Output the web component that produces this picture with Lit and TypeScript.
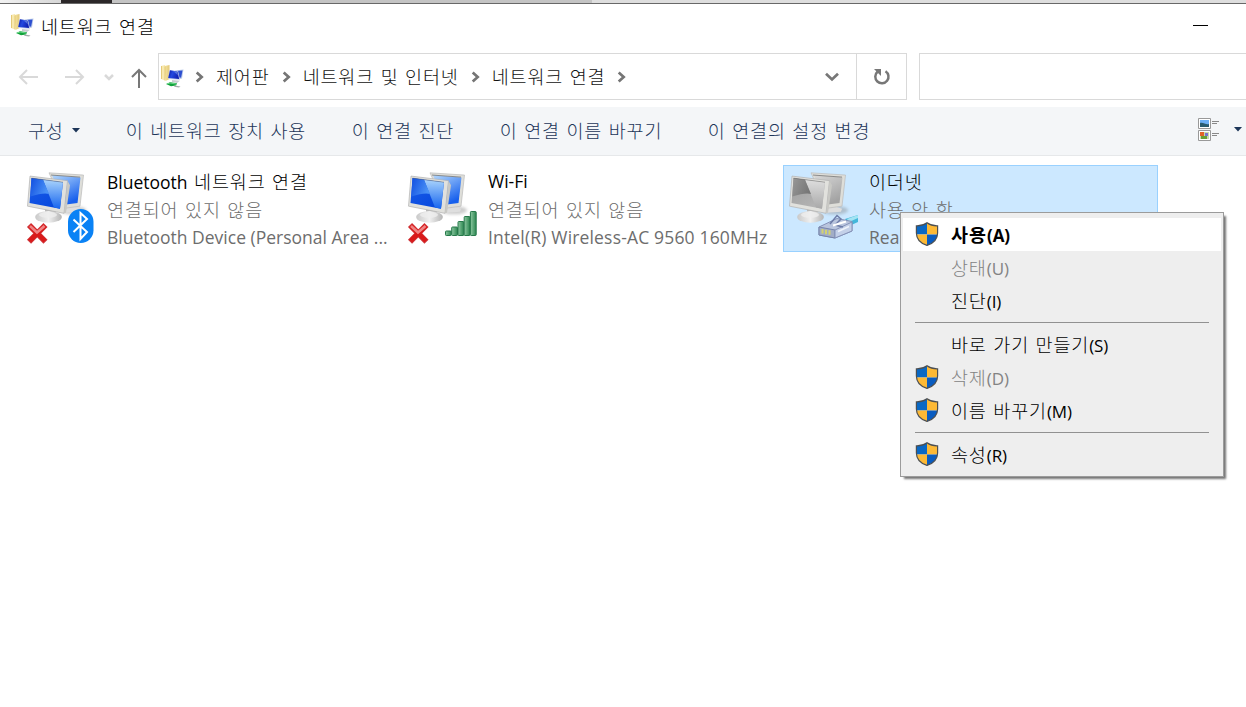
import { LitElement, html, css, svg, nothing } from "lit";
import { customElement, property } from "lit/decorators.js";
import { classMap } from "lit/directives/class-map.js";

const textBase = css`
  :host {
    font-family: "Open Sans", "Noto Sans CJK KR", sans-serif;
    font-size: 18px;
    font-weight: 300;
  }
  * { box-sizing: border-box; }
  svg { display: block; flex: none; overflow: visible; }
`;

const ko = css`
  .ko {
    font-family: "Noto Sans CJK KR", sans-serif;
    font-weight: 300;
    font-size: 18.500px;
    letter-spacing: 0.85px;
    word-spacing: 1.600px;
    white-space: pre;
  }
`;

/* Folder with a small network monitor. */
@customElement("net-folder-icon")
class NetFolderIcon extends LitElement {
  static styles = css`:host { display: block; flex: none; width: 24px; height: 24px; } svg { display: block; }`;
  render() {
    return html`<svg width="24" height="24" viewBox="0 0 24 24">
      <defs>
        <linearGradient id="f"><stop offset="0" stop-color="#f7e7a4"/><stop offset="1" stop-color="#e3c878"/></linearGradient>
        <linearGradient id="m" x2="1" y2="0.3"><stop offset="0" stop-color="#0714a0"/><stop offset=".45" stop-color="#2449df"/><stop offset="1" stop-color="#1022b4"/></linearGradient>
      </defs>
      <path d="M0 1 4 0v15.500l-4-1.500z" fill="#f8e9b0"/>
      <path d="M3.500 1l5-1v14l-4 2z" fill="url(#f)"/>
      <path d="M.5 1v13M4 1.500v14" stroke="#d9b652" stroke-width=".6"/>
      <path d="M14 5.500l8.500-1-1.500 9-4 1z" fill="#b9c9e9"/>
      <path d="M15.500 6l6-.6-1.400 7-3.500.5z" fill="#2d4fd0"/>
      <path d="M8 5l9 1 2 9-11.500-1z" fill="#cfd8ec"/>
      <path d="M9 5.200l7.500 1.300 1.700 7.500-11-1z" fill="url(#m)"/>
      <path d="M12 6l4 .8 1 3.500z" fill="#7ea1f0" opacity=".6"/>
      <path d="M11 15l8 .8-3 2.200-5-1z" fill="#c9ced2"/>
      <path d="M5 19l4-1.800 7 1-1 2.300-5 .7z" fill="#12a33b"/>
      <path d="M6 19l3-1 6 1" stroke="#6ad688" fill="none"/>
      <path d="M14 20.500l5.500 1-1.500 1-5-.7z" fill="#a3aaa9"/>
    </svg>`;
  }
}

/* UAC shield. */
@customElement("uac-shield")
class UacShield extends LitElement {
  static styles = css`:host { display: block; flex: none; width: 24px; height: 24px; } svg { display: block; }`;
  render() {
    const shape = "M12 .8C9 3 5 4 1.400 3.900V11C1.400 17 6 21.500 12 23.400 18 21.500 22.600 17 22.600 11V3.900C19 4 15 3 12 .8Z";
    return html`<svg width="24" height="24" viewBox="0 0 24 24">
      <defs><clipPath id="s"><path d=${shape}/></clipPath></defs>
      <g clip-path="url(#s)">
        <path d="M0 0h12v12.500H0z" fill="#0a68c4"/><path d="M12 0h12v12.500H12z" fill="#fdb935"/>
        <path d="M0 12.500h12v12H0z" fill="#fdb935"/><path d="M12 12.500h12v12H12z" fill="#0a5cc0"/>
      </g>
      <path d=${shape} fill="none" stroke="#4c4f52" stroke-width="1.200"/>
    </svg>`;
  }
}

type Badge = "bluetooth" | "signal" | "ethernet";

/* Paired monitors with a connection badge. */
@customElement("adapter-icon")
class AdapterIcon extends LitElement {
  @property() badge: Badge = "bluetooth";
  @property({ type: Boolean }) off = false;
  static styles = css`:host { display: block; flex: none; width: 72px; height: 76px; } svg { display: block; }`;

  private cross() {
    return svg`<g fill="none">
      <path d="M2 54 18.500 70.700M18.500 54 2 70.700" stroke="#cf3a3f" stroke-width="5.800"/>
      <path d="M2.600 54.600 18 70M18 54.600 2.600 70" stroke="#d91a1a" stroke-width="4.400"/>
      <path d="M3 55 10 61.500 17.500 55" stroke="#ef8585" stroke-width="2.600"/>
    </g>`;
  }

  private badgeArt() {
    if (this.badge === "bluetooth") {
      return svg`<rect x="41" y="38" width="25.500" height="34" rx="12.700" fill="#0a82f5"/>
        <path d="M46.500 48.500 60 61 53.500 68V42L60 48 46.500 61" fill="none" stroke="#fff" stroke-width="2"/>`;
    }
    if (this.badge === "signal") {
      const bars = [[37.500, 60, 4.500], [43.700, 56, 8.500], [50, 50.500, 14], [56.200, 45.500, 19], [62.400, 40.500, 24]];
      return svg`${bars.map(([x, y, h]) => svg`<rect x=${x} y=${y} width="5.800" height=${h} rx=".8" fill="url(#g)" stroke="#26794a"/>`)}`;
    }
    return svg`<path d="M56 48 69 44v7l-9 4z" fill="#43b7da"/><path d="M58 48l11-4v3l-9 4z" fill="#a2e4f3"/>
      <path d="M30 56 48 47.500l15 3V60L46 67 30 64z" fill="#b9c5de" stroke="#8592b8"/>
      <path d="M30 56l16 3V67L30 64z" fill="#a2adc6" stroke="#7785ab"/>
      <path d="M46 59 63 51v9L46 67z" fill="#c3d0e8" stroke="#8592b8"/>
      <path d="M41 53 48 44.500l4 3.500-6 6 8 2" fill="none" stroke="#6d7ca8" stroke-width="1.500"/>
      <path d="M44 54.500l13-4" stroke="#fff" stroke-width="2"/>
      <path d="M49 60.500l11-5" stroke="#eef3fb" stroke-width="1.500"/>
      <path d="M33.500 58v4.500M37 58.700v4.500M40.500 59.300v4.500" stroke="#d4d36e" stroke-width="2"/>`;
  }

  render() {
    const o = this.off;
    return html`<svg width="72" height="76" viewBox="-1 -1 72 76">
      <defs>
        <linearGradient id="a" x1="0" y1="0" x2=".7" y2="1">
          <stop offset="0" stop-color=${o ? "#9c9c9c" : "#1d5eea"}/><stop offset="1" stop-color=${o ? "#b5b5b5" : "#0648dd"}/>
        </linearGradient>
        <linearGradient id="v" x1="0" y1="0" x2="0" y2="1">
          <stop offset="0" stop-color=${o ? "#dedede" : "#a9d3fc"}/><stop offset="1" stop-color=${o ? "#a9a9a9" : "#1665ef"}/>
        </linearGradient>
        <linearGradient id="l" x1="0" y1="0" x2="1" y2=".4">
          <stop offset="0" stop-color=${o ? "#989898" : "#104de0"}/><stop offset="1" stop-color=${o ? "#777" : "#4a92f6"}/>
        </linearGradient>
        <linearGradient id="b" x1="0" y1="0" x2=".5" y2="1">
          <stop offset="0" stop-color=${o ? "#d8d8d8" : "#b4d8fc"}/><stop offset="1" stop-color=${o ? "#a3a3a3" : "#1760ed"}/>
        </linearGradient>
        <linearGradient id="c"><stop offset="0" stop-color="#c9c9c9"/><stop offset=".5" stop-color="#f0f0f0"/><stop offset="1" stop-color="#b5b5b5"/></linearGradient>
        <linearGradient id="g"><stop offset="0" stop-color="#8dc8a1"/><stop offset="1" stop-color="#2c8650"/></linearGradient>
        <filter id="soft" x="-30%" y="-50%" width="160%" height="200%"><feGaussianBlur stdDeviation="1.500"/></filter>
      </defs>
      <g transform="translate(0 1) scale(1 1.020)">
        <ellipse cx="46" cy="37.500" rx="13" ry="4" fill="#808080" opacity=".4" filter="url(#soft)"/>
        <path d="M38 33l9 1 6 2-1 3-14 1z" fill="#dedede"/>
        <path d="M22 .8 56.500 3 53 33.500 38 35.500z" fill="#deded9" stroke="#bababa" stroke-width=".7"/>
        <path d="M25 3 53.500 5.300l-3 25L37 32z" fill="url(#b)"/>
        <path d="M24 3 53 5" stroke="#777" stroke-width=".8"/>
        <path d="M18 36 29 38l-1 5H18z" fill="#b9b9b9"/>
        <ellipse cx="21.500" cy="44" rx="13.300" ry="5.800" fill="url(#c)"/>
        <ellipse cx="21" cy="42" rx="9" ry="3" fill="#eee" opacity=".8"/>
        <path d="M3 4 40.500 8.500 37 40.500 .5 33.500z" fill="#e1e1dd" stroke="#b2b2b2" stroke-width=".7"/>
        <path d="M4.500 6 36 10 33 36 2.500 30.500z" fill="url(#a)"/>
        <path d="M16 7.500 36 10 33 36 27 34.900z" fill="url(#v)"/>
        <path d="M4.500 6 16 7.500 22 21.500Q16 20 3.300 24z" fill="url(#l)"/>
        <path d="M4.500 6 36 10" stroke="#555" stroke-width=".7" opacity=".6"/>
        <path d="M40.500 8.500 37 40.500l2-.5 4-27z" fill="#c8c8c4"/>
      </g>
      ${o ? nothing : this.cross()}${this.badgeArt()}
    </svg>`;
  }
}

@customElement("adapter-card")
class AdapterCard extends LitElement {
  @property() name = "";
  @property() status = "";
  @property() device = "";
  @property() badge: Badge = "bluetooth";
  @property({ type: Boolean }) selected = false;
  static styles = [textBase, ko, css`
    :host { display: block; width: 375px; flex: none; }
    .card { display: flex; height: 87px; border: 1px solid transparent; padding: 4px 0 0 4px; }
    .selected { background: #cce8ff; border-color: #99d1ff; }
    .lines { margin-left: 9px; margin-top: -2px; display: grid; grid-template-rows: 28px 28px 28px; line-height: 27px; color: #6d6d6d; white-space: pre; }
    .name { color: #000; }
    .latin { font-family: "Open Sans", sans-serif; font-weight: 400; font-size: 17.500px; }
    .loose { letter-spacing: .17px; }
  `];
  render() {
    const parts = this.name.split(/(?<=[a-z]) /);
    const latinName = /^[A-Z]/.test(this.name);
    return html`<div class=${classMap({ card: true, selected: this.selected })}>
      <adapter-icon .badge=${this.badge} ?off=${this.selected}></adapter-icon>
      <div class="lines">
        <div class="name">${latinName
          ? html`<span class="latin">${parts[0]}</span>${parts[1] ? html`<span class="ko"> ${parts[1]}</span>` : nothing}`
          : html`<span class="ko">${this.name}</span>`}</div>
        <div class="ko">${this.status}</div>
        <div class=${classMap({ latin: true, loose: this.badge === "signal" })}>${this.device}</div>
      </div>
    </div>`;
  }
}

interface Entry { text?: string; key?: string; shield?: boolean; disabled?: boolean; active?: boolean; }

@customElement("context-menu")
class ContextMenu extends LitElement {
  static styles = [textBase, ko, css`
    :host { display: block; width: 324px; }
    .menu { height: 265px; background: #eee; border: 1px solid #9b9b9b; padding: 5px 2px; box-shadow: 3px 3px 2px -1px rgba(0,0,0,.55); color: #000; }
    .item { display: flex; align-items: center; height: 33px; padding-left: 12px; }
    .slot { width: 24px; height: 24px; margin: -2px 12px 0 0; }
    .label { white-space: pre; line-height: 27px; padding-top: 1px; }
    .key { font-family: "Open Sans", sans-serif; font-size: 17px; font-weight: 400; letter-spacing: -.1px; }
    .active { background: #fff; }
    .active .ko { font-weight: 700; letter-spacing: 1px; }
    .active .key { font-weight: 700; }
    .disabled { color: #838383; }
    .sep { height: 11px; padding: 5px 12px; }
    .line { height: 1px; background: #919191; }
  `];
  private entries: Entry[] = [
    { text: "사용", key: "(A)", shield: true, active: true },
    { text: "상태", key: "(U)", disabled: true },
    { text: "진단", key: "(I)" },
    {},
    { text: "바로 가기 만들기", key: "(S)" },
    { text: "삭제", key: "(D)", shield: true, disabled: true },
    { text: "이름 바꾸기", key: "(M)", shield: true },
    {},
    { text: "속성", key: "(R)", shield: true },
  ];
  render() {
    return html`<div class="menu">${this.entries.map((e) => e.text
      ? html`<div class=${classMap({ item: true, active: !!e.active, disabled: !!e.disabled })}>
          <div class="slot">${e.shield ? html`<uac-shield></uac-shield>` : nothing}</div>
          <div class="label"><span class="ko">${e.text}</span><span class="key">${e.key}</span></div>
        </div>`
      : html`<div class="sep"><div class="line"></div></div>`)}</div>`;
  }
}

@customElement("app-root")
class AppRoot extends LitElement {
  static styles = [textBase, ko, css`
    :host { display: block; position: relative; width: 1246px; height: 707px; overflow: hidden; background: #fff; color: #000; }
    .behind { display: flex; height: 3px; background: #dedede; }
    .behind .pale { width: 61px; background: linear-gradient(90deg, #f2f2f2, #d6d6d6); }
    .behind .dark { width: 51px; background: #2b2729; }
    .behind .mid { width: 480px; background: #c4c4c4; }
    .edge { height: 1px; background: #686868; }
    .title { display: flex; align-items: center; height: 49px; padding: 0 38px 5px 11px; line-height: 27px; }
    .title .ko { margin: 0 0 0 6px; flex: 1; }
    .min { width: 15px; height: 1px; background: #000; margin-bottom: 1px; }
    .nav { display: flex; height: 47px; }
    .arrows { display: flex; align-items: center; width: 158px; padding: 1px 0 0 18px; }
    .address { display: flex; width: 699px; border: 1px solid #d9d9d9; align-items: center; padding-left: 2px; }
    .crumbs { display: flex; align-items: center; flex: 1; line-height: 27px; }
    .crumbs .ko { margin-top: -1px; color: #111; }
    .drop { margin-right: 17px; }
    .refresh { display: flex; width: 51px; margin-left: -1px; border: 1px solid #d9d9d9; align-items: center; justify-content: center; }
    .search { flex: 1; margin-left: 12px; border: 1px solid #d9d9d9; border-right: 0; }
    .bar { display: flex; align-items: center; height: 49px; margin-top: 7px; padding: 0 4px 1px 28px; background: #f4f6f8; border-bottom: 1px solid #e6e8ea; color: #1c3558; line-height: 27px; }
    .cmd { flex: none; }
    .caret { margin: 0 46px 1px 8px; }
    .view { display: flex; align-items: center; gap: 15px; margin-left: auto; }
    .view svg { margin-top: -2px; }
    .view svg:first-child { margin-top: -3px; }
    .list { display: flex; gap: 6px; padding: 9px 0 0 21px; }
    .popup { position: absolute; left: 900px; top: 212px; }
    .w1 { width: 226px; } .w2 { width: 148px; } .w3 { width: 208px; }
    .chev { margin: 0 12px 0 12px; }
    .first { margin-left: 10px; }
  `];

  private chevron(first = false) {
    return html`<svg class=${classMap({ chev: true, first })} width="9" height="12" viewBox="0 0 9 12"><path d="M1.700 1.500 6.700 6l-5 4.500" fill="none" stroke="#757575" stroke-width="2.700"/></svg>`;
  }

  render() {
    return html`
      <div class="behind"><div class="pale"></div><div class="dark"></div><div class="mid"></div></div>
      <div class="edge"></div>
      <div class="title"><net-folder-icon></net-folder-icon><span class="ko">네트워크 연결</span><div class="min"></div></div>
      <div class="nav">
        <div class="arrows">
          <svg width="140" height="22" viewBox="0 0 140 22" fill="none" stroke="#d9d9d9" stroke-width="2">
            <path d="M20 11H2M9 4 2 11l7 7M47 11H65M58 4l7 7-7 7"/>
            <path d="M87 9l4 4 4-4" stroke-width="2.500"/>
            <path d="M121 22V4M114 11l7-7 7 7" stroke="#777"/>
          </svg>
        </div>
        <div class="address">
          <net-folder-icon></net-folder-icon>
          <div class="crumbs">
            ${this.chevron(true)}<span class="ko">제어판</span>
            ${this.chevron()}<span class="ko">네트워크 및 인터넷</span>
            ${this.chevron()}<span class="ko">네트워크 연결</span>
            ${this.chevron()}
          </div>
          <svg class="drop" width="14" height="10" viewBox="0 0 14 10"><path d="M1 1.800l6 5.700 6-5.700" fill="none" stroke="#777" stroke-width="2.700"/></svg>
        </div>
        <div class="refresh">
          <svg width="18" height="18" viewBox="0 0 18 18"><path d="M12.500 3.200A6.600 6.600 0 1 1 4.500 3.800" fill="none" stroke="#777" stroke-width="2.500"/><path d="M1 1h7v7z" fill="#777"/></svg>
        </div>
        <div class="search"></div>
      </div>
      <div class="bar">
        <span class="ko cmd">구성</span>
        <svg class="caret" width="8" height="5" viewBox="0 0 8 5"><path d="M0 0h8L4 4.500z" fill="#1c3558"/></svg>
        <span class="ko cmd w1">이 네트워크 장치 사용</span>
        <span class="ko cmd w2">이 연결 진단</span>
        <span class="ko cmd w3">이 연결 이름 바꾸기</span>
        <span class="ko cmd">이 연결의 설정 변경</span>
        <div class="view">
          <svg width="21" height="23" viewBox="0 0 21 23">
            <path d="M.5.500h12v10H.5zM.5 12.500h12v10H.5z" fill="#fff" stroke="#999"/>
            <path d="M2 2h9v7H2z" fill="#6aaef5"/><path d="M2 5c3-1 6 2 9 1v3H2z" fill="#285b70"/>
            <path d="M2 14h9v7H2z" fill="#c6dcaa"/><path d="M2 14h4v4H2z" fill="#e06527"/><path d="M7 15h3v3H7z" fill="#7774cf"/><path d="M3 18h6v3H3z" fill="#69a034"/>
            <path d="M14 3.500h7M14 5.500h5M14 15.500h7M14 17.500h5" stroke="#888"/>
          </svg>
          <svg width="8" height="5" viewBox="0 0 8 5"><path d="M0 0h8L4 4.500z" fill="#1c3558"/></svg>
        </div>
      </div>
      <div class="list">
        <adapter-card name="Bluetooth 네트워크 연결" status="연결되어 있지 않음" device="Bluetooth Device (Personal Area ..." badge="bluetooth"></adapter-card>
        <adapter-card name="Wi-Fi" status="연결되어 있지 않음" device="Intel(R) Wireless-AC 9560 160MHz" badge="signal"></adapter-card>
        <adapter-card name="이더넷" status="사용 안 함" device="Rea" badge="ethernet" selected></adapter-card>
      </div>
      <context-menu class="popup"></context-menu>
    `;
  }
}
